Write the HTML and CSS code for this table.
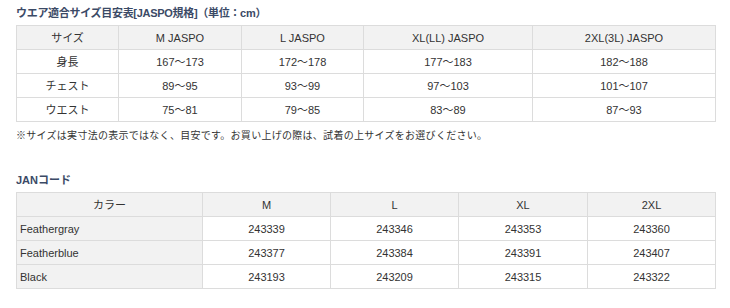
FILE: index.html
```html
<!DOCTYPE html>
<html lang="ja">
<head>
<meta charset="utf-8">
<link rel="stylesheet" href="styles.css">
</head>
<body>
<div class="page">
  <h3 class="heading">ウエア適合サイズ目安表[JASPO規格]（単位：cm）</h3>
  <table class="tbl size">
    <colgroup>
      <col class="c1"><col class="c2"><col class="c3"><col class="c4"><col class="c5">
    </colgroup>
    <tr class="head"><th>サイズ</th><th>M JASPO</th><th>L JASPO</th><th>XL(LL) JASPO</th><th>2XL(3L) JASPO</th></tr>
    <tr><td>身長</td><td>167～173</td><td>172～178</td><td>177～183</td><td>182～188</td></tr>
    <tr><td>チェスト</td><td>89～95</td><td>93～99</td><td>97～103</td><td>101～107</td></tr>
    <tr><td>ウエスト</td><td>75～81</td><td>79～85</td><td>83～89</td><td>87～93</td></tr>
  </table>
  <p class="note">※サイズは実寸法の表示ではなく、目安です。お買い上げの際は、試着の上サイズをお選びください。</p>
  <h3 class="heading jan">JANコード</h3>
  <table class="tbl jan-tbl">
    <colgroup>
      <col class="j1"><col class="j2"><col class="j3"><col class="j4"><col class="j5">
    </colgroup>
    <tr class="head"><th>カラー</th><th>M</th><th>L</th><th>XL</th><th>2XL</th></tr>
    <tr><th class="name">Feathergray</th><td>243339</td><td>243346</td><td>243353</td><td>243360</td></tr>
    <tr><th class="name">Featherblue</th><td>243377</td><td>243384</td><td>243391</td><td>243407</td></tr>
    <tr><th class="name">Black</th><td>243193</td><td>243209</td><td>243315</td><td>243322</td></tr>
  </table>
</div>
</body>
</html>
```
FILE: styles.css
```css
html, body {
  margin: 0;
  padding: 0;
  background: #ffffff;
}
.page {
  padding: 4px 15px 0 16px;
  font-family: "Liberation Sans", "Noto Sans CJK JP", sans-serif;
  color: #333333;
}
.heading {
  margin: 0 0 3px 0;
  font-size: 11px;
  line-height: 18px;
  font-weight: bold;
  color: #3b4a66;
  letter-spacing: -0.3px;
}
.heading.jan {
  margin-top: 27px;
  margin-bottom: 3px;
  letter-spacing: 0;
}
.tbl {
  width: 699px;
  border-collapse: collapse;
  table-layout: fixed;
  font-size: 11px;
}
.tbl th, .tbl td {
  border: 1px solid #dcdcdc;
  height: 23px;
  padding: 0 3px;
  text-align: center;
  font-weight: normal;
  line-height: 14px;
  color: #333333;
}
.tbl .head th {
  background: #f2f2f2;
}
.tbl th.name {
  background: #f2f2f2;
  text-align: left;
}
.size .c1 { width: 102px; }
.size .c2 { width: 123px; }
.size .c3 { width: 122px; }
.size .c4 { width: 169px; }
.size .c5 { width: 183px; }
.jan-tbl .j1 { width: 186px; }
.jan-tbl .j2 { width: 128px; }
.jan-tbl .j3 { width: 128px; }
.jan-tbl .j4 { width: 129px; }
.jan-tbl .j5 { width: 128px; }
.note {
  margin: 6px 0 0 0;
  font-size: 10px;
  line-height: 16px;
  letter-spacing: 0.28px;
  color: #333333;
}
```
